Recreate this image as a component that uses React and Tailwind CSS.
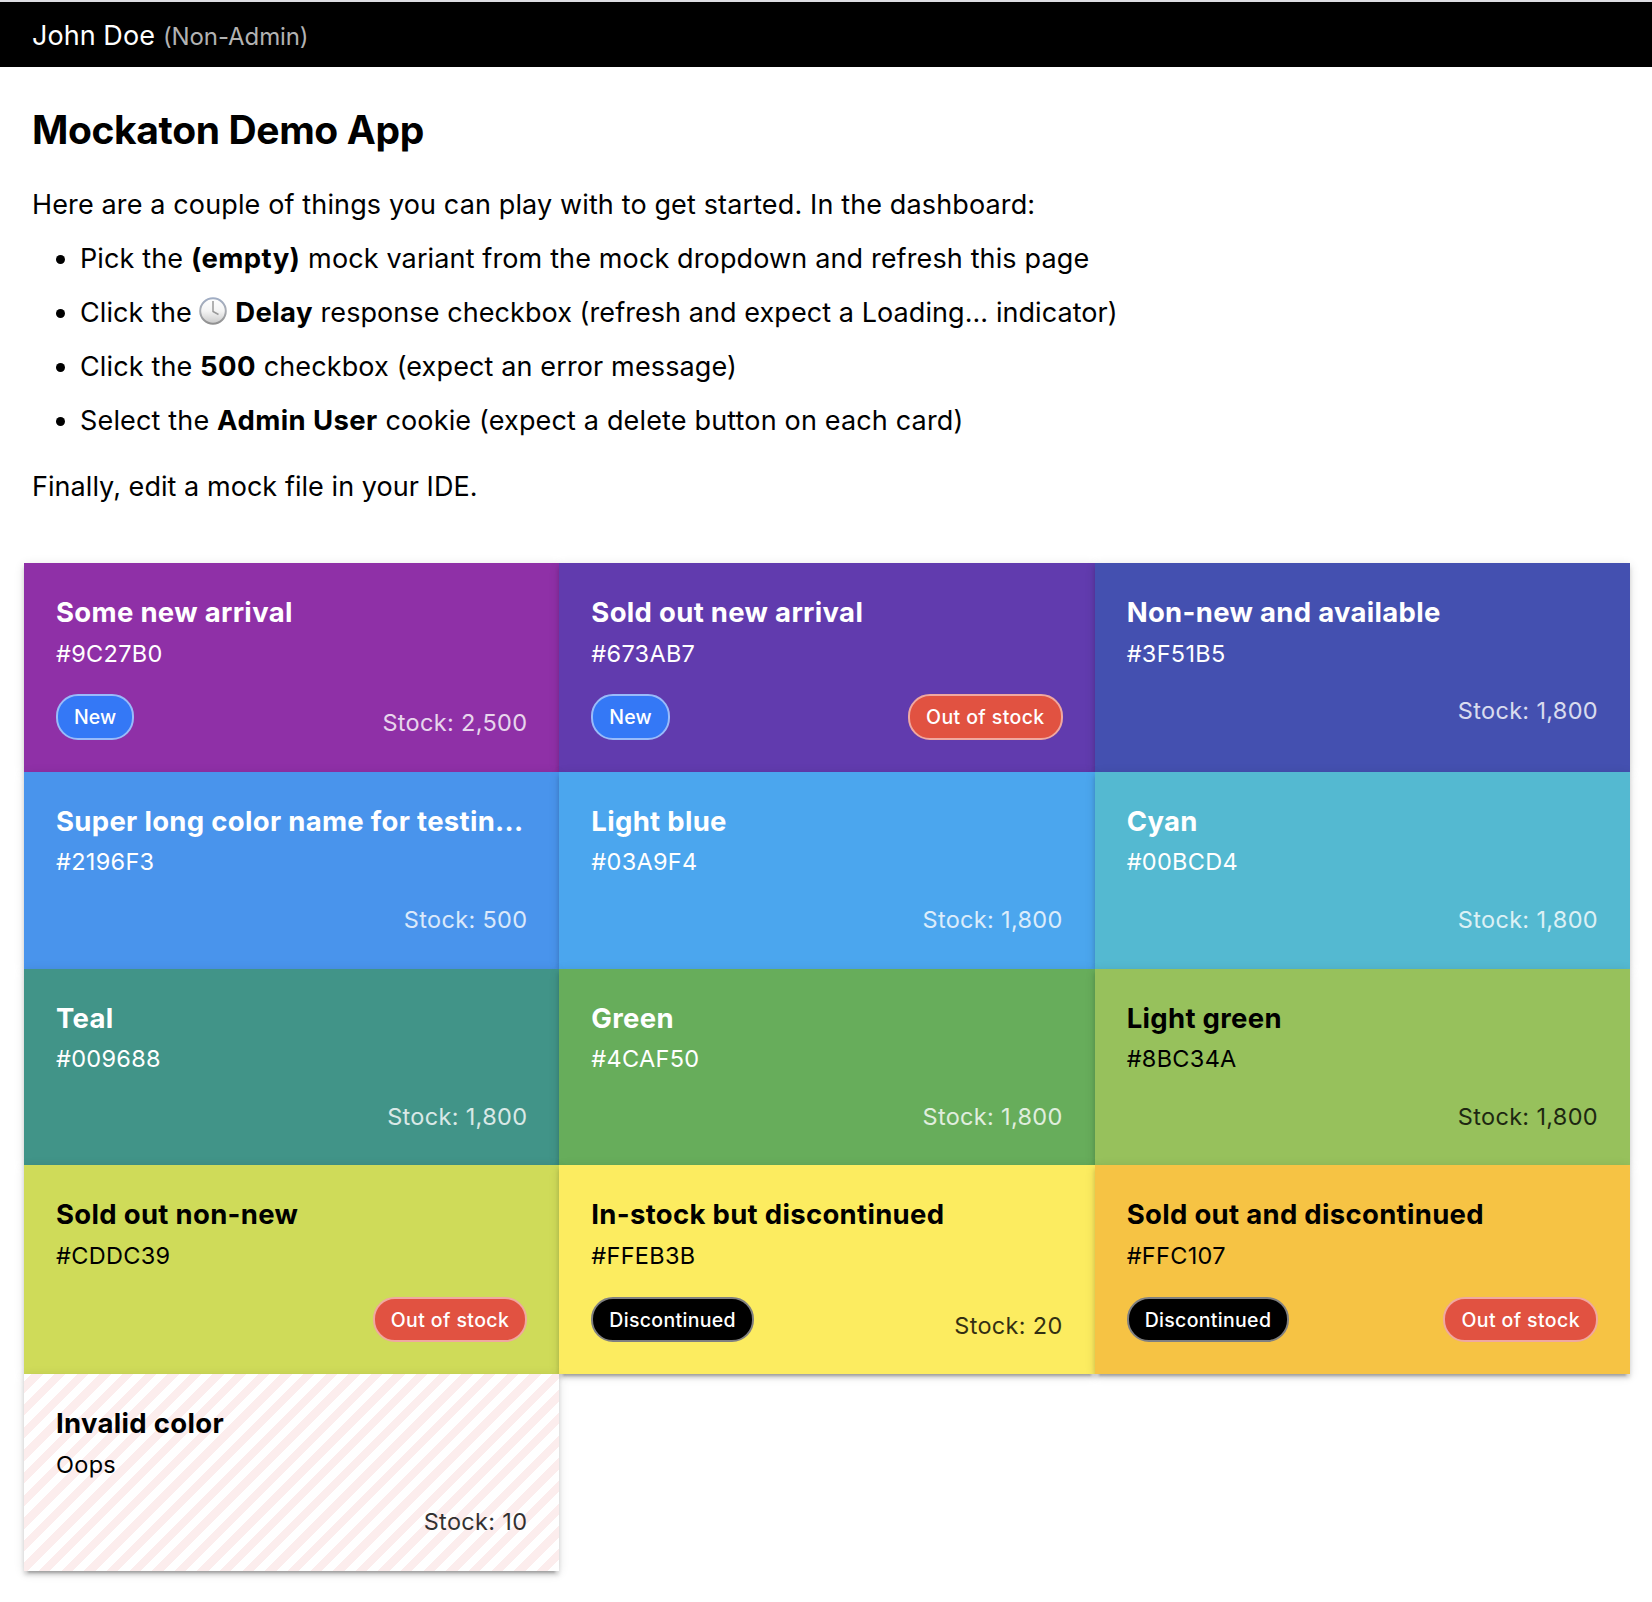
const SHADOW =
  "shadow-[0_6px_2px_-4px_rgba(0,0,0,0.2),0_4px_4px_0_rgba(0,0,0,0.14),0_2px_10px_0_rgba(0,0,0,0.12)]";

const COLORS = [
  { name: "Some new arrival", hex: "#9C27B0", bg: "bg-[#8F30A7]", light: true, tall: true, chip: "New", stock: "2,500" },
  { name: "Sold out new arrival", hex: "#673AB7", bg: "bg-[#613BAE]", light: true, tall: true, chip: "New" },
  { name: "Non-new and available", hex: "#3F51B5", bg: "bg-[#4450B0]", light: true, tall: true, stock: "1,800" },
  { name: "Super long color name for testin...", hex: "#2196F3", bg: "bg-[#4994EC]", light: true, stock: "500" },
  { name: "Light blue", hex: "#03A9F4", bg: "bg-[#4BA6EE]", light: true, stock: "1,800" },
  { name: "Cyan", hex: "#00BCD4", bg: "bg-[#54B9D1]", light: true, stock: "1,800" },
  { name: "Teal", hex: "#009688", bg: "bg-[#419488]", light: true, stock: "1,800" },
  { name: "Green", hex: "#4CAF50", bg: "bg-[#67AD5B]", light: true, stock: "1,800" },
  { name: "Light green", hex: "#8BC34A", bg: "bg-[#97C15C]", stock: "1,800" },
  { name: "Sold out non-new", hex: "#CDDC39", bg: "bg-[#CFDB59]", tall: true, compact: true },
  { name: "In-stock but discontinued", hex: "#FFEB3B", bg: "bg-[#FCEC60]", tall: true, compact: true, chip: "Discontinued", stock: "20" },
  { name: "Sold out and discontinued", hex: "#FFC107", bg: "bg-[#F6C344]", tall: true, compact: true, chip: "Discontinued" },
  {
    name: "Invalid color",
    hex: "Oops",
    bg: "bg-[repeating-linear-gradient(-45deg,#fff_0_8px,#fceded_8px_16px)]",
    tall: true,
    stock: "10",
  },
];

const CHIPS = {
  New: "bg-[#3478F6] border-[#99BBFA] tracking-[0.1px]",
  Discontinued: "bg-black border-[#808080] tracking-[0.32px]",
  "Out of stock": "bg-[#E15241] border-[#F0A8A0] tracking-[0.4px]",
};

function Chip({ label, compact }) {
  return (
    <span className={`flex items-center rounded-[22px] border-2 px-4 text-[19.5px] leading-[24px] font-medium text-white ${compact ? "mt-px h-[45px] pt-px" : "h-[46px]"} ${CHIPS[label]}`}>
      {label}
    </span>
  );
}

function Card({ color }) {
  const { name, hex, bg, light, tall, compact, chip, stock } = color;
  return (
    <li className={`flex min-w-0 flex-col p-8 ${SHADOW} ${bg} ${light ? "text-white" : "text-black"}`}>
      <h2 className="text-[27.5px] leading-[35px] font-bold tracking-[0.31px] whitespace-nowrap">{name}</h2>
      <p className={`text-[23.5px] leading-[29px] tracking-[0.3px] ${tall ? "mt-[9px] mb-[26px]" : "mt-2 mb-[27px]"}`}>{hex}</p>
      <div className="flex items-end">
        {chip && <Chip label={chip} compact={compact} />}
        <div className="ml-auto">
          {stock ? (
            <p className={`text-[23.5px] leading-[29px] tracking-[0.32px] opacity-80 ${compact ? "pt-[3px] pb-[2px]" : "pt-[2px] pb-[3px]"}`}>Stock: {stock}</p>
          ) : (
            <Chip label="Out of stock" compact={compact} />
          )}
        </div>
      </div>
    </li>
  );
}

function ClockIcon() {
  return (
    <svg viewBox="0 0 28 28" className="inline-block h-7 w-7 align-[-3px]" aria-hidden="true">
      <defs>
        <linearGradient id="face" x1="0" y1="0" x2="0" y2="1">
          <stop offset="0" stopColor="#ffffff" />
          <stop offset="0.5" stopColor="#f4f4f4" />
          <stop offset="1" stopColor="#c8c8c8" />
        </linearGradient>
        <linearGradient id="rim" x1="0" y1="0" x2="0" y2="1">
          <stop offset="0" stopColor="#a0adc4" />
          <stop offset="0.5" stopColor="#a9acb2" />
          <stop offset="1" stopColor="#8f8f8f" />
        </linearGradient>
      </defs>
      <circle cx="14" cy="14" r="12.8" fill="url(#face)" stroke="url(#rim)" strokeWidth="2" />
      <path d="M14 4V14.5L19.5 17.5" fill="none" stroke="#999999" strokeWidth="1.5" />
    </svg>
  );
}

function Strong({ children }) {
  return <b className="text-[27.5px] leading-none font-bold tracking-[0.4px]">{children}</b>;
}

export default function App() {
  return (
    <div className="min-h-[1602px] bg-white font-['Inter',sans-serif] font-[430] text-black">
      <header className="flex h-[67px] items-baseline border-t-2 border-[#dddde2] bg-black px-8 pt-[17px] leading-[34px]">
        <span className="text-[27px] tracking-[0.05px] text-white">John Doe</span>
        <span className="ml-2 text-[24px] tracking-[-0.1px] text-[#b2b2b2]">(Non-Admin)</span>
      </header>

      <main className="px-6">
        <section className="h-[496px] px-2 pt-[38px] text-[27px] leading-[34px] tracking-[0.13px]">
          <h1 className="text-[39px] leading-[50px] font-bold tracking-[-0.37px]">Mockaton Demo App</h1>
          <p className="mt-[33px]">
            Here are a couple of things you can play with to get started. In the dashboard:
          </p>
          <ul className="mt-5 flex list-disc flex-col gap-5 pl-12">
            <li className="h-[34px]">Pick the <Strong>(empty)</Strong> mock variant from the mock dropdown and refresh this page</li>
            <li className="h-[34px] tracking-[0.07px]">Click the <ClockIcon /> <Strong>Delay</Strong> response checkbox (refresh and expect a Loading... indicator)</li>
            <li className="h-[34px]">Click the <Strong>500</Strong> checkbox (expect an error message)</li>
            <li className="h-[34px] tracking-[0.16px]">Select the <Strong>Admin User</Strong> cookie (expect a delete button on each card)</li>
          </ul>
          <p className="mt-8 tracking-[0.05px]">Finally, edit a mock file in your IDE.</p>
        </section>

        <ul className="grid w-[1606px] grid-cols-3 grid-rows-[209px_197px_196px_209px_197px]">
          {COLORS.map((c) => (
            <Card key={c.name} color={c} />
          ))}
        </ul>
      </main>
    </div>
  );
}
